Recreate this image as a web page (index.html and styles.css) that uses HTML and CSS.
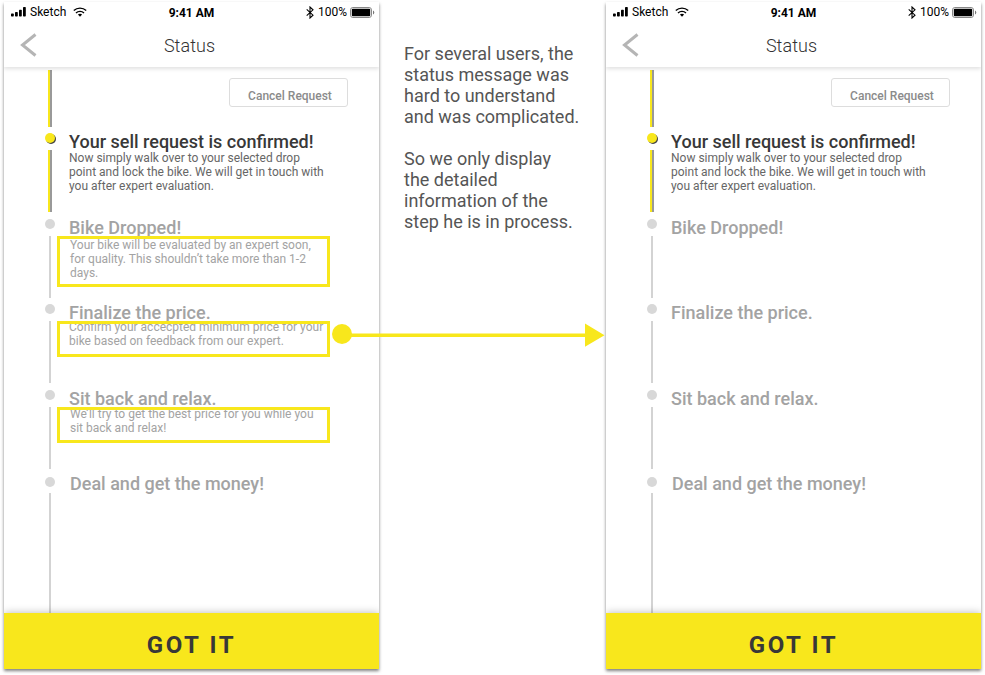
FILE: index.html
```html
<!DOCTYPE html>
<html lang="en">
<head>
<meta charset="utf-8">
<title>Status</title>
<link rel="stylesheet" href="styles.css">
</head>
<body>
<svg class="sprite" aria-hidden="true">
  <symbol id="signal" viewBox="0 0 16 10">
    <rect x="0" y="6.5" width="2.8" height="3" rx=".7"/>
    <rect x="4" y="5" width="2.8" height="4.5" rx=".7"/>
    <rect x="8" y="2.8" width="2.8" height="6.7" rx=".7"/>
    <rect x="12" y="0" width="2.8" height="9.5" rx=".7"/>
  </symbol>
  <symbol id="wifi" viewBox="0 0 14 10">
    <path d="M.8 3.6A8.9 8.9 0 0 1 13.2 3.6M3 6A5.7 5.7 0 0 1 11 6" fill="none" stroke="#000" stroke-width="1.4"/>
    <path d="M4.9 7.6a3.1 3.1 0 0 1 4.2 0L7 9.7z"/>
  </symbol>
  <symbol id="bluetooth" viewBox="0 0 8 13">
    <path d="M.7 3.4L7 9.2 4 12V1L7 3.8.7 9.6" fill="none" stroke="#000" stroke-width="1.1"/>
  </symbol>
  <symbol id="battery" viewBox="0 0 25 11">
    <rect x=".5" y=".5" width="21" height="10" rx="2.4" fill="none" stroke="#888"/>
    <rect x="1.8" y="1.8" width="18.4" height="7.4" rx="1"/>
    <path d="M23 3.5a2.2 2.2 0 0 1 0 4z" fill="#777"/>
  </symbol>
  <symbol id="back" viewBox="0 0 18 24">
    <path d="M15.5 1.5L2.5 12 15.5 22.5" fill="none" stroke="#b5b5b5" stroke-width="3"/>
  </symbol>
</svg>
<main class="board">
  <section class="phone">
    <header class="top">
      <div class="statusbar">
        <div class="carrier"><svg class="signal"><use href="#signal"/></svg><span>Sketch</span><svg class="wifi"><use href="#wifi"/></svg></div>
        <div class="clock">9:41 AM</div>
        <div class="power"><svg class="bluetooth"><use href="#bluetooth"/></svg><span>100%</span><svg class="battery"><use href="#battery"/></svg></div>
      </div>
      <div class="nav"><svg class="back"><use href="#back"/></svg><h1>Status</h1></div>
    </header>
    <div class="intro"><i class="line"></i><button class="cancel">Cancel Request</button></div>
    <ol class="steps">
      <li class="step active"><div class="rail"><i class="dot"></i><i class="line"></i></div>
        <div class="info"><h2>Your sell request is confirmed!</h2><p>Now simply walk over to your selected drop<br>point and lock the bike. We will get in touch with<br>you after expert evaluation.</p></div></li>
      <li class="step dropped"><div class="rail"><i class="dot"></i><i class="line"></i></div>
        <div class="info"><h2>Bike Dropped!</h2><p>Your bike will be evaluated by an expert soon,<br>for quality. This shouldn’t take more than 1-2<br>days.</p></div><b class="mark tall"></b></li>
      <li class="step price"><div class="rail"><i class="dot"></i><i class="line"></i></div>
        <div class="info"><h2>Finalize the price.</h2><p>Confirm your accecpted minimum price for your<br>bike based on feedback from our expert.</p></div><b class="mark"></b></li>
      <li class="step relax"><div class="rail"><i class="dot"></i><i class="line"></i></div>
        <div class="info"><h2>Sit back and relax.</h2><p>We’ll try to get the best price for you while you<br>sit back and relax!</p></div><b class="mark"></b></li>
      <li class="step deal"><div class="rail"><i class="dot"></i><i class="line"></i></div>
        <div class="info"><h2>Deal and get the money!</h2></div></li>
    </ol>
    <button class="done">GOT IT</button>
  </section>

  <aside class="note">
    <p>For several users, the<br>status message was<br>hard to understand<br>and was complicated.</p>
    <p>So we only display<br>the detailed<br>information of the<br>step he is in process.</p>
  </aside>

  <section class="phone">
    <header class="top">
      <div class="statusbar">
        <div class="carrier"><svg class="signal"><use href="#signal"/></svg><span>Sketch</span><svg class="wifi"><use href="#wifi"/></svg></div>
        <div class="clock">9:41 AM</div>
        <div class="power"><svg class="bluetooth"><use href="#bluetooth"/></svg><span>100%</span><svg class="battery"><use href="#battery"/></svg></div>
      </div>
      <div class="nav"><svg class="back"><use href="#back"/></svg><h1>Status</h1></div>
    </header>
    <div class="intro"><i class="line"></i><button class="cancel">Cancel Request</button></div>
    <ol class="steps">
      <li class="step active"><div class="rail"><i class="dot"></i><i class="line"></i></div>
        <div class="info"><h2>Your sell request is confirmed!</h2><p>Now simply walk over to your selected drop<br>point and lock the bike. We will get in touch with<br>you after expert evaluation.</p></div></li>
      <li class="step dropped"><div class="rail"><i class="dot"></i><i class="line"></i></div><div class="info"><h2>Bike Dropped!</h2></div></li>
      <li class="step price"><div class="rail"><i class="dot"></i><i class="line"></i></div><div class="info"><h2>Finalize the price.</h2></div></li>
      <li class="step relax"><div class="rail"><i class="dot"></i><i class="line"></i></div><div class="info"><h2>Sit back and relax.</h2></div></li>
      <li class="step deal"><div class="rail"><i class="dot"></i><i class="line"></i></div><div class="info"><h2>Deal and get the money!</h2></div></li>
    </ol>
    <button class="done">GOT IT</button>
  </section>
  <svg class="arrow" viewBox="0 0 273 24"><circle cx="10" cy="11" r="10"/><path d="M10 10.4H253V.6L272.5 12.2 253 23.8V14.1H10z"/></svg>
</main>
</body>
</html>
```

FILE: styles.css
```css
* { box-sizing: border-box; }
body { margin: 0; background: #fff; font-family: Roboto, sans-serif; overflow: hidden; }
h1, h2, p, ol { margin: 0; padding: 0; font-weight: 400; }
svg { display: block; flex: none; }
.sprite { display: none; }

.board {
  position: relative;
  display: grid;
  grid-template-columns: 375px 227px 375px;
  width: 985px;
  height: 675px;
  padding: 2px 4px 6px;
}
.phone {
  display: flex;
  flex-direction: column;
  height: 667px;
  background: #fff;
  box-shadow: 0 2px 3px rgba(0, 0, 0, .5);
}

.top { height: 65px; flex: none; box-shadow: 0 2px 4px rgba(0, 0, 0, .12); clip-path: inset(0 0 -8px 0); }
.statusbar {
  display: grid;
  grid-template-columns: 1fr auto 1fr;
  align-items: center;
  height: 20px;
  padding: 0 4px 0 7px;
  font-size: 12px;
  line-height: 14px;
}
.carrier, .power { display: flex; align-items: center; }
.power { justify-content: flex-end; }
.signal { width: 16px; height: 10px; margin-right: 3px; }
.carrier span { letter-spacing: 0; }
.wifi { width: 14px; height: 10px; margin-left: 7px; }
.clock { font-weight: 700; padding: 2px 3px 0 0; }
.bluetooth { width: 8px; height: 13px; margin-right: 4px; }
.battery { width: 25px; height: 11px; margin-left: 3px; }
.nav {
  display: grid;
  grid-template-columns: 60px 1fr 64px;
  align-items: center;
  height: 45px;
}
.back { width: 18px; height: 24px; margin-left: 16px; }
.nav h1 { text-align: center; font-size: 18px; font-weight: 300; line-height: 22px; color: #333; letter-spacing: .05px; padding-top: 3px; }

.intro { display: flex; justify-content: space-between; height: 66px; flex: none; padding: 3px 31px 0 44px; }
.intro .line { height: 57px; }
.cancel {
  width: 119px;
  height: 29px;
  margin-top: 8px;
  padding: 6px 0 0 3px;
  border: 1px solid #ddd;
  border-radius: 3px;
  background: #fff;
  color: #8b8b8b;
  font: 500 12px/14px Roboto, sans-serif;
}

.steps { list-style: none; flex: 1; display: flex; flex-direction: column; }
.step { position: relative; display: flex; height: 86px; padding-left: 41px; color: #a3a3a3; }
.dropped { height: 85px; }
.relax { height: 87px; }
.deal { flex: 1; height: auto; }
.rail { display: flex; flex-direction: column; align-items: center; width: 10px; gap: 7px; }
.dot { width: 10px; height: 10px; border-radius: 50%; background: #d8d8d8; }
.rail .line { width: 2px; height: 62px; background: #d3d3d3; }
.deal .rail { gap: 6px; }
.deal .line { flex: 1; }
.intro .line, .active .rail .line { width: 4px; background: linear-gradient(90deg, #f8e71c 0 2.3px, #999 2.3px); }
.active .dot { margin-left: -1px; background: #f8e71c; box-shadow: 1px 1px 0 #444; }
.info { margin: -2px 0 0 14px; white-space: nowrap; }
.info h2 { font-size: 18px; font-weight: 500; line-height: 21px; }
.info p { font-size: 12px; line-height: 14px; }
.active h2 { color: #383838; }
.active p { color: #666; margin-top: -1px; }
.dropped p, .relax p { padding-left: 1px; }
.price p { margin-top: -3px; }
.relax p { margin-top: -2px; }
.deal .info { margin-top: -4px; padding-left: 1px; }
.mark { position: absolute; left: 53px; top: 17px; width: 273px; height: 36px; border: 3px solid #f8e71c; }
.mark.tall { height: 51px; }

.done {
  position: relative;
  height: 56px;
  flex: none;
  border: 0;
  padding: 7px 0 0;
  background: #f8e71c;
  box-shadow: 0 0 8px rgba(0, 0, 0, .28);
  clip-path: inset(-14px 0 0 0);
  color: #383838;
  font: 700 24px/28px Roboto, sans-serif;
  letter-spacing: 2.6px;
}

.note { padding: 41px 0 0 25px; color: #555; font-size: 18px; line-height: 21px; white-space: nowrap; }
.note p + p { margin-top: 21px; }
.arrow { position: absolute; left: 332px; top: 323px; width: 273px; height: 24px; fill: #f8e71c; }
```
